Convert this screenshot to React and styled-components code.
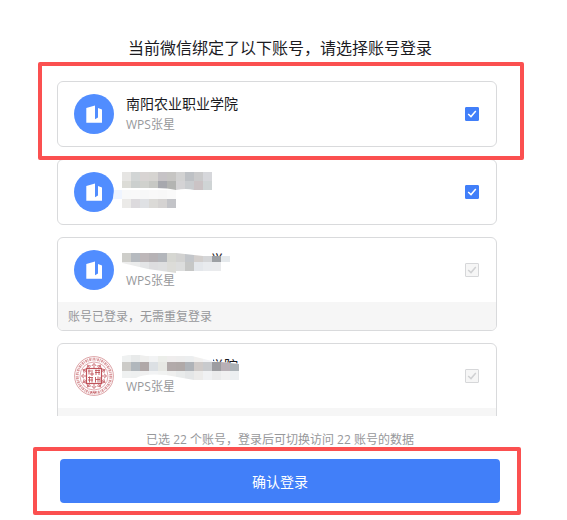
import React from 'react';
import styled, { createGlobalStyle } from 'styled-components';

const GlobalStyle = createGlobalStyle`
  * {
    box-sizing: border-box;
  }
  body {
    margin: 0;
    background: #fff;
    color: #1b1b1f;
    font-family: 'Open Sans', 'Noto Sans CJK SC', sans-serif;
  }
`;

const Page = styled.main`
  display: flex;
  justify-content: center;
  padding: 36px 7px 17px 0;
`;

const Dialog = styled.form`
  display: flex;
  flex-direction: column;
  width: 100%;
  max-width: 446px;
`;

const Title = styled.h1`
  margin: 0 0 21px;
  font-size: 16px;
  font-weight: 400;
  line-height: 24px;
  text-align: center;
`;

const ListArea = styled.div`
  position: relative;
`;

const AccountList = styled.ul`
  display: flex;
  flex-direction: column;
  gap: 12px;
  max-height: 335px;
  margin: 0;
  padding: 0 6px 0 0;
  overflow: hidden;
  list-style: none;
`;

const Card = styled.li`
  flex: none;
  overflow: hidden;
  border: 1px solid #d9dadc;
  border-radius: 6px;
`;

const CardBody = styled.label`
  position: relative;
  display: flex;
  align-items: center;
  gap: 12px;
  padding: 12px 17px 12px 16px;
  cursor: pointer;
`;

const AvatarSvg = styled.svg`
  flex: none;
  width: 40px;
  height: 40px;
`;

const Info = styled.span`
  flex: 1;
  display: flex;
  flex-direction: column;
  height: 40px;
`;

const Name = styled.span`
  padding-left: ${({ $indent }) => $indent || 0}px;
  font-size: 14px;
  line-height: 20px;
`;

const Nick = styled.span`
  color: #97989b;
  font-size: 12px;
  line-height: 22px;
`;

const Notice = styled.p`
  min-height: 28px;
  margin: 0;
  padding: 5px 10px 3px;
  background: #f6f6f6;
  color: #97989b;
  font-size: 12px;
  line-height: 20px;
`;

const CheckWrap = styled.span`
  display: grid;
  width: 14px;
  height: 14px;

  > * {
    grid-area: 1 / 1;
  }
`;

const CheckInput = styled.input`
  appearance: none;
  width: 14px;
  height: 14px;
  margin: 0;
  border: 1px solid #d6d7d9;
  border-radius: 1px;
  background: #fff;

  &:checked {
    border-color: #417ff9;
    background: #417ff9;
  }
  &:disabled {
    border-color: #d6d7d9;
    background: #f6f6f6;
  }
`;

const Tick = styled.svg`
  width: 14px;
  height: 14px;
  fill: none;
  stroke: ${({ $muted }) => ($muted ? '#d0d1d3' : '#fff')};
  stroke-width: 1.5;
  pointer-events: none;
`;

// lies over the name, so it can hide it
const Mosaic = styled.svg`
  position: absolute;
  top: 0;
  left: 48px;
  width: 140px;
  height: 64px;
  pointer-events: none;
`;

const Hint = styled.p`
  margin: 14px 0 9px;
  color: #97989b;
  font-size: 12px;
  line-height: 20px;
  text-align: center;
`;

const SubmitArea = styled.div`
  position: relative;
  margin: 0 3px;
`;

const SubmitButton = styled.button`
  width: 100%;
  height: 44px;
  border: 0;
  border-radius: 4px;
  background: #417ff9;
  color: #fff;
  font-family: inherit;
  font-size: 14px;
  cursor: pointer;
`;

const Frame = styled.div`
  position: absolute;
  border: 4px solid #fb5050;
  border-radius: 2px;
  pointer-events: none;
`;

const ListFrame = styled(Frame)`
  top: -19px;
  left: -19px;
  right: -21px;
  height: 98px;
`;

const SubmitFrame = styled(Frame)`
  inset: -12px -21px -12px -27px;
`;

function CompanyAvatar() {
  return (
    <AvatarSvg viewBox='0 0 40 40' aria-hidden='true'>
      <circle cx='20' cy='20' r='20' fill='#518dff' />
      <path d='M12.3 14 21 11.4V25.2L24 23.4V14L28 15.6V28.8H12.3Z' fill='#fff' />
    </AvatarSvg>
  );
}

function SealAvatar() {
  const rays = Array.from({ length: 12 }, (_, i) => i * 30);
  return (
    <AvatarSvg viewBox='0 0 40 40' fill='none' stroke='#c0535a' aria-hidden='true'>
      <circle cx='20' cy='20' r='19.4' strokeWidth='0.9' opacity='0.6' />
      <circle cx='20' cy='20' r='16.8' strokeWidth='2.8' strokeDasharray='1.7 0.7 0.8 0.9' opacity='0.6' />
      <circle cx='20' cy='20' r='14' strokeWidth='0.8' opacity='0.6' />
      {rays.map((angle) => (
        <path key={angle} d='M17.8 10 20 7.4 22.2 10M20 8.5V12' transform={`rotate(${angle} 20 20)`} opacity='0.8' />
      ))}
      <rect x='12.5' y='12.5' width='15' height='15' fill='#fff' strokeWidth='1.2' />
      <path
        d='M14 15h5M15 13.5v5M17 17h2v2h-2zM21 14.5h5M21 16.5h5M22 13.5v5.5M25 13.5v5.5M14 21.5h5M14 24h5M15.5 20.5v6M18 22v4.5M21.5 21v5.5M24 20.5v6M26 21v5.5M21 23.5h5'
        strokeWidth='0.9'
      />
      <path d='M17 36.2h6' strokeWidth='1.2' strokeDasharray='1.2 0.8' />
    </AvatarSvg>
  );
}

function Cells({ y, colors, height = 9 }) {
  return colors.map((color, i) => (
    <rect key={i} x={16 + i * 9} y={y} width='9' height={height} fill={color} />
  ));
}

const mosaics = {
  full: (
    <>
      <path d='M9 22Q7 24 8 28V42H104V22Z' fill='#fff' />
      <path d='M8 30H16V39H7Z' fill='#eff5ff' />
      <Cells y={12} colors={['#e6e5e3', '#d2d5d5', '#d8d4d3', '#d6d4d1', '#c6c3c6', '#c6c5c3', '#d2d2d2', '#bec1c5', '#cacacb', '#d6d7db']} />
      <Cells y={21} colors={['#dcdcd7', '#cbcfce', '#d0d1cd', '#c7c8c4', '#a7a8ae', '#b3b4b2', '#d4d3d5', '#c9cccf', '#cbc3c5', '#cfd4d5']} />
      <path d='M16 28H50Q62 28 70 30H16ZM70 30Q80 28 88 30Z' fill='#fff' />
      <Cells y={30} colors={['#f8f9f9', '#f9f9f9', '#f7f8f8', '#f9f9f9', '#f8f8f8', '#fafafa']} />
      <Cells y={39} colors={['#ebeae8', '#dcdadd', '#dfe1e4', '#dbdad7', '#d5d3d2', '#c3c4c8']} />
    </>
  ),
  slanted: (
    <>
      <clipPath id='slanted'>
        <path d='M16 15H70L97 18H124V24L115 26V33H70V35L42 31L12 24L16 22Z' />
      </clipPath>
      <path d='M16 12H104V18H120V34H16Z' fill='#fff' />
      <g clipPath='url(#slanted)'>
        <Cells y={15} colors={['#cececa', '#b6babf', '#bdb7b9', '#b6b2b5', '#b3b6bb', '#d6d7d2', '#d2d2d1', '#c3c6ca', '#d3cfcd', '#d5d6d8', '#9da0a4', '#e5e9ec']} />
        <Cells y={24} height={11} colors={['#ededed', '#ebecec', '#e4e5e7', '#dddddf', '#dedfe0', '#dcdcd8', '#dcdddd', '#c6c7c6', '#e4e7eb', '#e9ebee', '#eaebed']} />
      </g>
    </>
  ),
  wavy: (
    <>
      <clipPath id='wavy'>
        <path d='M17 12Q28 9 40 12H86L106 17 133 20V36H88L60 31Q38 29 30 34H16V12Z' />
      </clipPath>
      <path d='M16 11H107V17L133 20V38H104L16 33Z' fill='#fff' />
      <g clipPath='url(#wavy)'>
        <Cells y={11} height={7} colors={['#eff1f1', '#e8eaea', '#efefee', '#f2f3f4', '#eceeea', '#efeded', '#ededed', '#eceeef', '#f1f0ef', '#f2f3f5']} />
        <Cells y={18} colors={['#cccbc8', '#b1b7bc', '#b0a8a8', '#dce0e4', '#e7e8e4', '#b2aaaa', '#b0a9a8', '#afb3b8', '#cfcac8', '#c8cacd', '#9d9da1', '#b8b0b6', '#abb2b7']} />
        <Cells y={27} colors={['#eff1f1', '#eef0f0', '#f0f0f0', '#f2f3f4', '#f1f2f1', '#efefee', '#e9ebeb', '#e4e6e7', '#ecebea', '#f0f1f3', '#ebebec', '#f1f0f1', '#eceff1']} />
      </g>
    </>
  ),
};

const accounts = [
  { id: 1, name: '南阳农业职业学院', nick: 'WPS张星' },
  { id: 2, mosaic: 'full' },
  { id: 3, name: '大学', indent: 70, nick: 'WPS张星', mosaic: 'slanted', disabled: true, notice: '账号已登录，无需重复登录' },
  { id: 4, name: '学院', indent: 84, nick: 'WPS张星', mosaic: 'wavy', disabled: true, seal: true },
];

function AccountCard({ account }) {
  const { name, nick, indent, mosaic, disabled, notice, seal } = account;
  return (
    <Card>
      <CardBody>
        {seal ? <SealAvatar /> : <CompanyAvatar />}
        <Info>
          <Name $indent={indent}>{name}</Name>
          <Nick>{nick}</Nick>
        </Info>
        {mosaic && <Mosaic viewBox='0 0 140 64' aria-hidden='true'>{mosaics[mosaic]}</Mosaic>}
        <CheckWrap>
          <CheckInput type='checkbox' defaultChecked disabled={disabled} aria-label={name || '账号'} />
          <Tick viewBox='0 0 14 14' $muted={disabled} aria-hidden='true'>
            <path d='M3.2 7 6 9.6 10.8 4' />
          </Tick>
        </CheckWrap>
      </CardBody>
      {disabled && <Notice>{notice}</Notice>}
    </Card>
  );
}

export default function App() {
  return (
    <>
      <GlobalStyle />
      <Page>
        <Dialog onSubmit={(e) => e.preventDefault()}>
          <Title>当前微信绑定了以下账号，请选择账号登录</Title>
          <ListArea>
            <AccountList>
              {accounts.map((account) => (
                <AccountCard key={account.id} account={account} />
              ))}
            </AccountList>
            <ListFrame />
          </ListArea>
          <Hint>已选 22 个账号，登录后可切换访问 22 账号的数据</Hint>
          <SubmitArea>
            <SubmitButton type='submit'>确认登录</SubmitButton>
            <SubmitFrame />
          </SubmitArea>
        </Dialog>
      </Page>
    </>
  );
}
